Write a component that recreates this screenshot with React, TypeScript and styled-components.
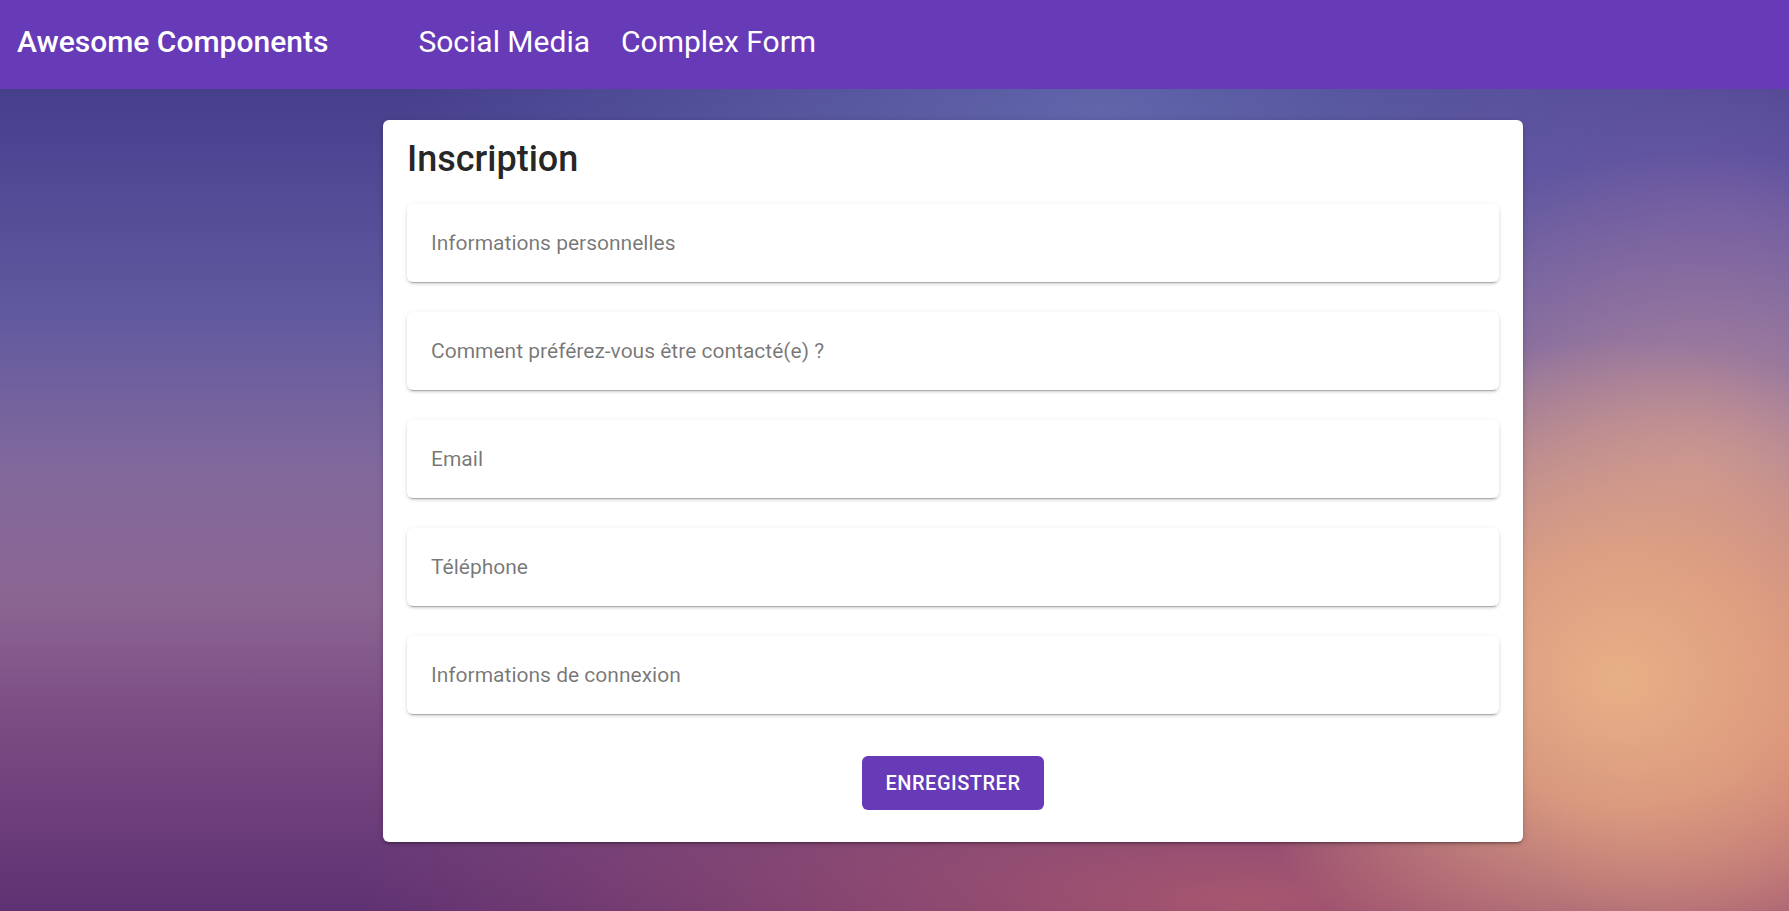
import React from "react";
import styled, { createGlobalStyle } from "styled-components";

const GlobalStyle = createGlobalStyle`
  html, body {
    margin: 0;
    padding: 0;
    height: 100%;
  }
  body {
    font-family: Roboto, "Liberation Sans", Arial, sans-serif;
    overflow: hidden;
  }
  * { box-sizing: border-box; }
`;

const Page = styled.div`
  min-height: 100vh;
  display: flex;
  flex-direction: column;
  background:
    radial-gradient(ellipse 400px 340px at 1620px 680px, rgba(232, 176, 134, 1) 0%, rgba(228, 165, 128, 0.85) 38%, rgba(216, 130, 118, 0) 100%),
    radial-gradient(ellipse 300px 280px at 1810px 740px, rgba(216, 118, 110, 0.85) 0%, rgba(216, 118, 110, 0) 100%),
    radial-gradient(ellipse 420px 320px at 1700px 470px, rgba(196, 146, 152, 0.85) 0%, rgba(196, 146, 152, 0) 100%),
    radial-gradient(ellipse 420px 300px at 1720px 220px, rgba(110, 90, 168, 0.75) 0%, rgba(110, 90, 168, 0) 100%),
    radial-gradient(ellipse 700px 300px at 1100px 110px, rgba(110, 120, 185, 0.65) 0%, rgba(110, 120, 185, 0) 100%),
    radial-gradient(ellipse 900px 200px at 1250px 900px, rgba(185, 95, 110, 0.8) 0%, rgba(185, 95, 110, 0) 100%),
    linear-gradient(180deg, #3d3582 0%, #4a4390 14%, #625a9f 35%, #82699c 52%, #8b6592 66%, #7a4a82 80%, #5e3172 100%);
`;

const Toolbar = styled.header`
  height: 89px;
  flex: 0 0 89px;
  display: flex;
  align-items: center;
  padding: 0 17px 7px;
  background: #673ab7;
  color: #ffffff;
`;

const Brand = styled.span`
  font-size: 30px;
  font-weight: 500;
  letter-spacing: 0;
`;

const Nav = styled.nav`
  display: flex;
  align-items: center;
  gap: 31px;
  margin-left: 90px;
`;

const NavLink = styled.a`
  color: #ffffff;
  font-size: 30px;
  font-weight: 400;
  text-decoration: none;
  cursor: pointer;
`;

const Main = styled.main`
  padding: 31px 0 0 383px;
`;

const Card = styled.section`
  width: 1140px;
  background: #ffffff;
  border-radius: 6px;
  padding: 16px 24px 32px;
  box-shadow: 0 3px 2px -2px rgba(0, 0, 0, 0.25), 0 2px 3px 0 rgba(0, 0, 0, 0.14), 0 1px 7px 0 rgba(0, 0, 0, 0.12);
`;

const Title = styled.h2`
  margin: 0 0 22px;
  font-size: 36px;
  line-height: 46px;
  font-weight: 500;
  color: rgba(0, 0, 0, 0.87);
`;

const Panels = styled.div`
  display: flex;
  flex-direction: column;
  gap: 30px;
`;

const Panel = styled.div`
  height: 78px;
  display: flex;
  align-items: center;
  padding: 0 24px;
  background: #ffffff;
  border-radius: 6px;
  box-shadow: 0 4px 1px -3px rgba(0, 0, 0, 0.22), 0 2px 3px 0 rgba(0, 0, 0, 0.14), 0 1px 7px 0 rgba(0, 0, 0, 0.06);
  font-size: 21px;
  color: rgba(0, 0, 0, 0.54);
  cursor: pointer;
`;

const Actions = styled.div`
  display: flex;
  justify-content: center;
  margin-top: 42px;
`;

const SubmitButton = styled.button`
  height: 54px;
  padding: 0 24px;
  border: none;
  border-radius: 6px;
  background: #673ab7;
  color: #ffffff;
  font-family: Roboto, "Liberation Sans", Arial, sans-serif;
  font-size: 20px;
  font-weight: 500;
  letter-spacing: 0.5px;
  cursor: pointer;
`;

const sections = [
  "Informations personnelles",
  "Comment préférez-vous être contacté(e) ?",
  "Email",
  "Téléphone",
  "Informations de connexion",
];

export default function App() {
  return (
    <>
      <GlobalStyle />
      <Page>
        <Toolbar>
          <Brand>Awesome Components</Brand>
          <Nav>
            <NavLink>Social Media</NavLink>
            <NavLink>Complex Form</NavLink>
          </Nav>
        </Toolbar>
        <Main>
          <Card>
            <Title>Inscription</Title>
            <Panels>
              {sections.map((s) => (
                <Panel key={s}>{s}</Panel>
              ))}
            </Panels>
            <Actions>
              <SubmitButton type="button">ENREGISTRER</SubmitButton>
            </Actions>
          </Card>
        </Main>
      </Page>
    </>
  );
}
